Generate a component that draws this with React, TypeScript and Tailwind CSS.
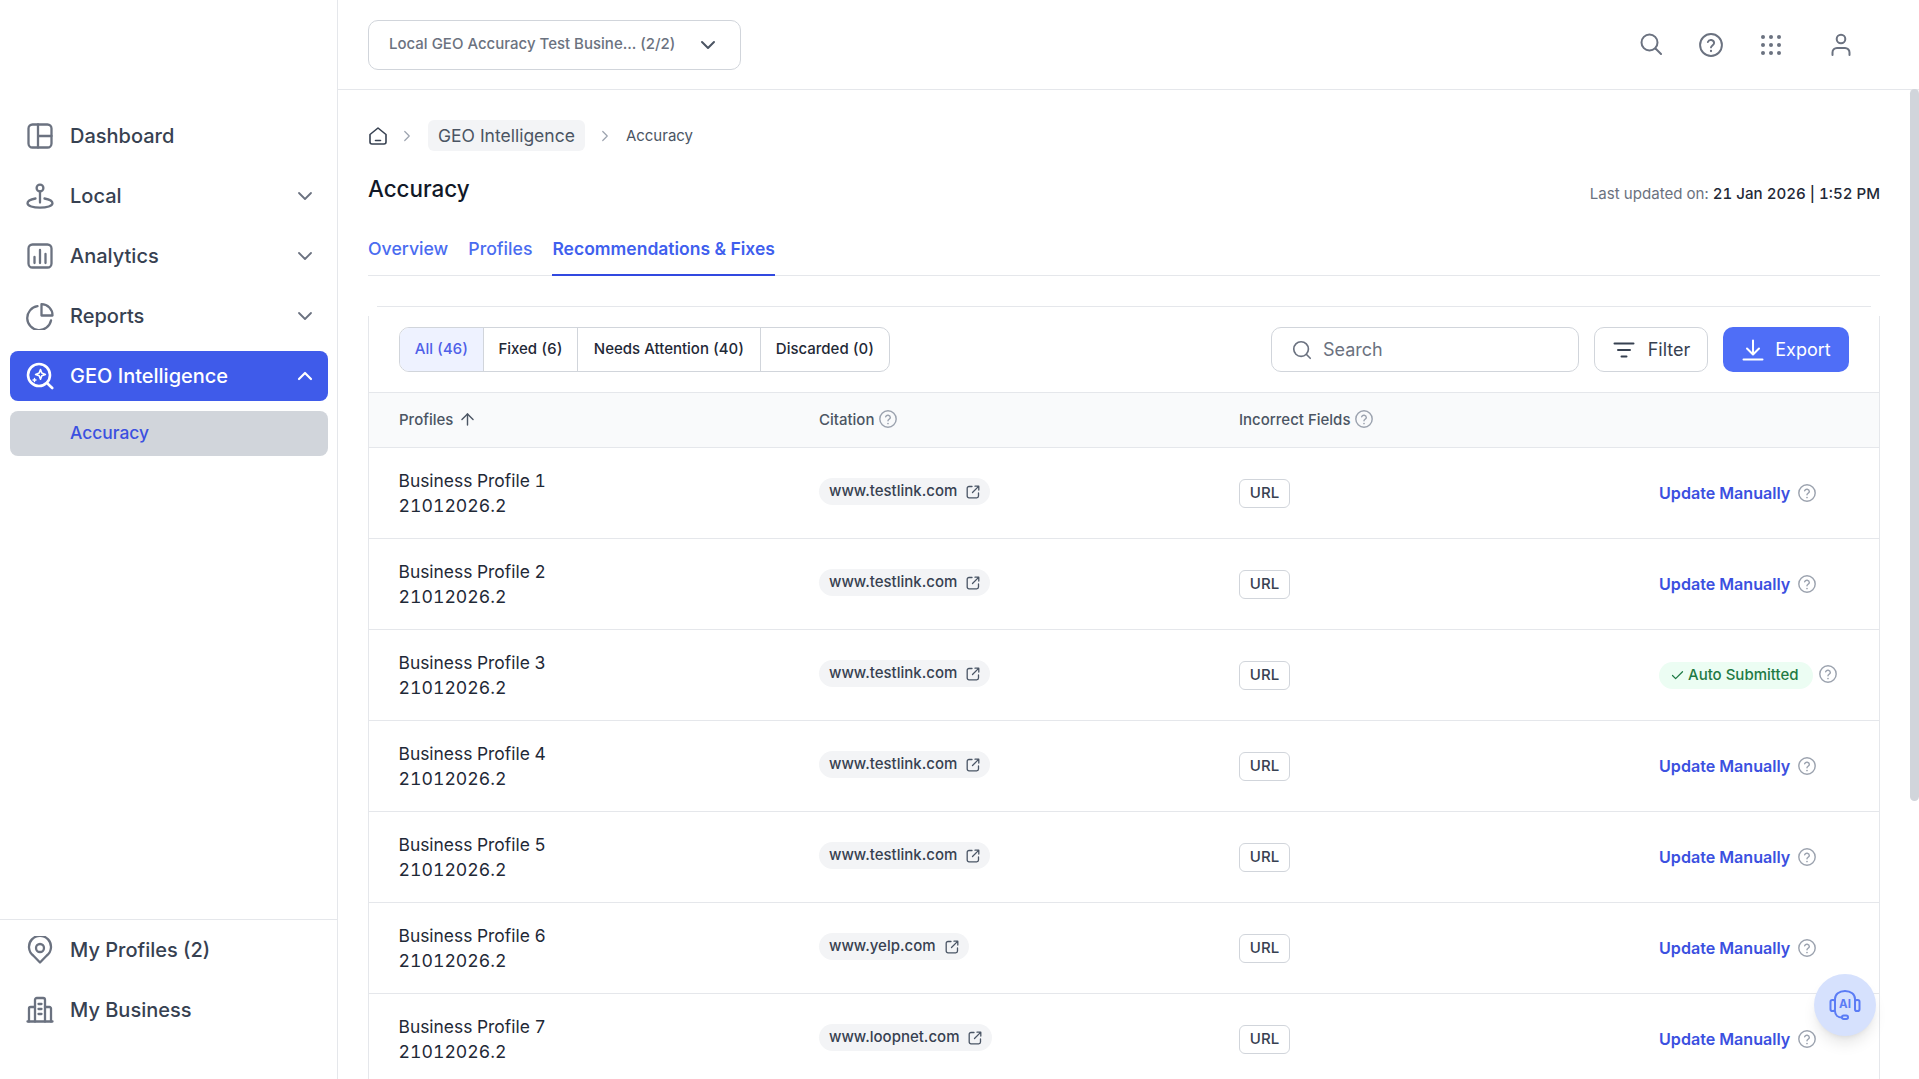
import React from "react";
import { ChevronDown, ChevronUp, ChevronRight, Search, ArrowUp, Check } from "lucide-react";

const Help = ({ className = "" }: { className?: string }) => (
  <svg viewBox="0 0 20 20" fill="none" stroke="currentColor" strokeWidth="1.6" strokeLinecap="round" strokeLinejoin="round" className={className}>
    <circle cx="10" cy="10" r="9.1" />
    <path d="M7.4 7.5a2.7 2.7 0 0 1 5.200.8c0 1.800-2.600 2.200-2.600 3.700" />
    <path d="M10 15h.01" strokeWidth="1.9" />
  </svg>
);
const Ext = () => (
  <svg viewBox="0 0 16 16" fill="none" stroke="currentColor" strokeWidth="1.3" strokeLinecap="round" strokeLinejoin="round" className="w-[16px] h-[16px] text-gray-600 shrink-0">
    <path d="M13.5 9v3a1.8 1.8 0 0 1-1.8 1.8H4A1.8 1.8 0 0 1 2.2 12V4.3A1.8 1.8 0 0 1 4 2.500h3" />
    <path d="M10 2.200h3.800V6M13.600 2.400 7.500 8.500" />
  </svg>
);
const S = ({ children, cls = "w-[28px] h-[28px]" }: { children: React.ReactNode; cls?: string }) => (
  <svg viewBox="0 0 28 28" fill="none" stroke="currentColor" strokeWidth="2.300" strokeLinecap="round" strokeLinejoin="round" className={cls}>{children}</svg>
);
const IDash = () => <S><rect x="2.500" y="2.500" width="23" height="23" rx="4" /><path d="M12 2.500v23M12 14h13.500" /></S>;
const ILocal = () => <S><circle cx="14" cy="6" r="3.400" /><path d="M14 9.500v11" /><path d="M9.500 16.500C5 17.300 1.500 19 1.500 21.300c0 2.600 5.600 4.400 12.500 4.400s12.500-1.800 12.500-4.400c0-2.300-3.500-4-8-4.800" /></S>;
const IChart = () => <S><rect x="2.500" y="2.500" width="23" height="23" rx="4" /><path d="M8.500 21v-6M14 21V8M19.500 21v-9" /></S>;
const IPie = () => <S><path d="M11.500 4.200A12 12 0 1 0 25 18.500" /><path d="M15.500 2.200A11 11 0 0 1 26.500 13.500H15.500z" /></S>;
const IGeo = () => (
  <S>
    <circle cx="13" cy="13" r="11" strokeWidth="2.600" />
    <path d="M22 22l4.200 4" strokeWidth="2.600" />
    <path d="M14.500 7.500l1.300 3.600 3.600 1.300-3.600 1.300-1.300 3.600-1.300-3.600-3.600-1.300 3.600-1.300z" strokeWidth="1.600" />
    <path d="M8.500 16.500v3M7 18h3" strokeWidth="1.400" />
  </S>
);
const IPin = () => <S><path d="M14 26.500 7.200 19.500A11 11 0 1 1 20.800 19.500z" /><circle cx="14" cy="12" r="4" /></S>;
const IBiz = () => <S><path d="M1.500 25.500h25" /><path d="M9 25.500V3.800A1.800 1.800 0 0 1 10.800 2h6.400A1.800 1.800 0 0 1 19 3.800v21.700" /><path d="M9 11H4.500A1.500 1.500 0 0 0 3 12.500v13M19 11h4.500a1.500 1.500 0 0 1 1.500 1.500v13" /><path d="M12.500 8h3M12.500 13h3M12.500 18h3" /></S>;

const NavItem = ({ icon, label, chev }: { icon: React.ReactNode; label: string; chev?: boolean }) => (
  <div className="h-[50px] ml-[10px] mr-[9px] flex items-center pl-[16px] pr-[11px] text-[#374151]">
    <span className="w-[28px] h-[28px] text-[#6b7280] shrink-0">{icon}</span>
    <span className="ml-[16px] text-[20px] font-medium flex-1">{label}</span>
    {chev && <ChevronDown className="w-[24px] h-[24px] text-[#6b7280]" strokeWidth={1.8} />}
  </div>
);

const rows = [
  { n: 1, c: "www.testlink.com" },
  { n: 2, c: "www.testlink.com" },
  { n: 3, c: "www.testlink.com", auto: true },
  { n: 4, c: "www.testlink.com" },
  { n: 5, c: "www.testlink.com" },
  { n: 6, c: "www.yelp.com" },
  { n: 7, c: "www.loopnet.com" },
];

export default function App() {
  return (
    <div className="relative flex h-[1079px] w-full overflow-hidden bg-white" style={{ fontFamily: "Inter, 'Noto Sans', sans-serif" }}>
      <aside className="w-[338px] shrink-0 border-r border-[#e5e7eb] flex flex-col pt-[111px]">
        <nav className="flex flex-col gap-[10px] flex-1">
          <NavItem icon={<IDash />} label="Dashboard" />
          <NavItem icon={<ILocal />} label="Local" chev />
          <NavItem icon={<IChart />} label="Analytics" chev />
          <NavItem icon={<IPie />} label="Reports" chev />
          <div className="h-[50px] ml-[10px] mr-[9px] rounded-[8px] bg-[#3f5bea] text-white flex items-center pl-[16px] pr-[11px]">
            <span className="w-[28px] h-[28px] shrink-0"><IGeo /></span>
            <span className="ml-[16px] text-[20px] font-medium flex-1">GEO Intelligence</span>
            <ChevronUp className="w-[24px] h-[24px]" strokeWidth={2.2} />
          </div>
          <div className="h-[45px] ml-[10px] mr-[9px] rounded-[8px] bg-[#d1d5db] flex items-center pl-[60px] text-[17.400px] font-medium text-[#3b50e0]">Accuracy</div>
        </nav>
        <div className="border-t border-[#e5e7eb] h-[160px] pt-[5px] flex flex-col gap-[10px]">
          <NavItem icon={<IPin />} label="My Profiles (2)" />
          <NavItem icon={<IBiz />} label="My Business" />
        </div>
      </aside>

      <main className="flex-1 min-w-0 flex flex-col">
        <header className="h-[90px] shrink-0 border-b border-[#e5e7eb] flex items-center pl-[30px] pr-[66.500px]">
          <div className="w-[373px] h-[50px] rounded-[10px] border border-[#d1d5db] flex items-center pl-[20px] pr-[20px] justify-between">
            <span className="text-[15px] font-medium text-[#6b7280] whitespace-nowrap -mt-[1px]">Local GEO Accuracy Test Busine... (2/2)</span>
            <ChevronDown className="w-[24px] h-[24px] text-[#4b5563]" strokeWidth={2} />
          </div>
          <div className="ml-auto flex items-center text-[#6b7280]">
            <svg viewBox="0 0 22 22" fill="none" stroke="currentColor" strokeWidth="2" strokeLinecap="round" className="w-[22px] h-[22px] -mt-[1px]">
              <circle cx="9.500" cy="9.500" r="8" />
              <path d="M15.500 15.500 21 21" />
            </svg>
            <Help className="w-[24px] h-[24px] ml-[37px]" />
            <svg viewBox="0 0 20 20" fill="currentColor" className="w-[20px] h-[20px] ml-[38px]">
              {[2, 10, 18].map((y) => [2, 10, 18].map((x) => <circle key={`${x}${y}`} cx={x} cy={y} r="2" />))}
            </svg>
            <svg viewBox="0 0 24 24" fill="none" stroke="currentColor" strokeWidth="2" strokeLinecap="round" className="w-[24px] h-[24px] ml-[48px] -mt-[1px]">
              <circle cx="12" cy="7" r="4.300" />
              <path d="M3.500 23v-2.500A4.500 4.500 0 0 1 8 16h8a4.500 4.500 0 0 1 4.500 4.500V23" />
            </svg>
          </div>
        </header>

        <div className="flex-1 min-h-0 overflow-hidden pl-[30px] pr-[39px] pt-[30px]">
          <div className="flex items-center h-[31px]">
            <svg viewBox="0 0 20 20" fill="none" stroke="#374151" strokeWidth="1.600" strokeLinejoin="round" strokeLinecap="round" className="w-[20px] h-[20px]">
              <path d="M2 8.500 10 2l8 6.500V16a2 2 0 0 1-2 2H4a2 2 0 0 1-2-2z" />
              <path d="M7.500 14.500h5" />
            </svg>
            <ChevronRight className="w-[18px] h-[18px] text-[#9ca3af] ml-[10px]" strokeWidth={1.6} />
            <span className="ml-[12px] h-[31px] pt-[1px] px-[10px] rounded-[6px] bg-[#f3f4f6] flex items-center text-[17.500px] text-[#4b5563]">GEO Intelligence</span>
            <ChevronRight className="w-[18px] h-[18px] text-[#9ca3af] ml-[11px]" strokeWidth={1.6} />
            <span className="ml-[12px] text-[15px] text-[#4b5563] mt-[2px]">Accuracy</span>
          </div>

          <div className="flex justify-between items-start mt-[22px] h-[32px]">
            <h1 className="text-[22.400px] leading-[32px] font-medium text-[#111827]">Accuracy</h1>
            <div className="text-[15.100px] leading-[32px] mt-[5px] text-[#6b7280] tabular-nums">Last updated on: <span className="text-[#1f2937] font-medium">21 Jan 2026 | 1:52 PM</span></div>
          </div>

          <div className="flex gap-[20px] mt-[31px] h-[40px] border-b border-[#e5e7eb] text-[17.700px] font-medium text-[#4a6cf0]">
            <span className="h-[40px] flex items-center pb-[14px]">Overview</span>
            <span className="h-[40px] flex items-center pb-[14px]">Profiles</span>
            <span className="h-[40px] flex items-center pb-[12px] border-b-[2px] border-[#3149e0] font-semibold box-border text-[17.500px] text-[#3f5fee]">Recommendations &amp; Fixes</span>
          </div>

          <section className="mt-[30px]">
            <div className="h-px mx-[9px] bg-[#e5e7eb]" />
            <div className="mt-[9px] border-x border-[#e5e7eb] pb-[400px]">
              <div className="h-[77px] flex items-start pt-[11px] pl-[30px] pr-[30px] border-b border-[#e5e7eb]">
                <div className="flex h-[45px] rounded-[10px] border border-[#d1d5db] overflow-hidden text-[15px] font-medium text-[#1f2937] tabular-nums">
                  <div className="w-[84px] flex items-center justify-center bg-[#eef2ff] text-[#4f5fe8] border-r border-[#d1d5db]">All (46)</div>
                  <div className="w-[94px] flex items-center justify-center border-r border-[#d1d5db]">Fixed (6)</div>
                  <div className="w-[183px] flex items-center justify-center border-r border-[#d1d5db]">Needs Attention (40)</div>
                  <div className="w-[128px] flex items-center justify-center">Discarded (0)</div>
                </div>
                <div className="ml-auto w-[308px] h-[45px] rounded-[10px] border border-[#d1d5db] flex items-center pl-[19px] text-[18px] text-[#6b7280]">
                  <Search className="w-[22px] h-[22px] mr-[10px]" strokeWidth={1.8} />
                  Search
                </div>
                <div className="ml-[15px] w-[114px] h-[45px] rounded-[10px] border border-[#d1d5db] flex items-center justify-center text-[18px] text-[#374151] gap-[13px]">
                  <svg viewBox="0 0 22 22" fill="none" stroke="#374151" strokeWidth="2" strokeLinecap="round" className="w-[22px] h-[22px] ml-[1px]"><path d="M1.500 4.500h19M5 11h12M8.500 17.500h5" /></svg>
                  Filter
                </div>
                <div className="ml-[15px] w-[126px] h-[45px] rounded-[10px] bg-[#4f6ef7] flex items-center justify-center text-[18px] text-white gap-[11px]">
                  <svg viewBox="0 0 22 22" fill="none" stroke="#fff" strokeWidth="2" strokeLinecap="round" strokeLinejoin="round" className="w-[22px] h-[22px] ml-[1px]"><path d="M11 1.500V15M5 9.500l6 6 6-6M1.500 20.500h19" /></svg>
                  Export
                </div>
              </div>

              <div className="h-[55px] bg-[#f9fafb] border-b border-[#e5e7eb] grid grid-cols-[420px_420px_420px_1fr] pl-[30px] items-center text-[15px] font-medium text-[#4b5563]">
                <div className="flex items-center gap-[5px]">Profiles <ArrowUp className="w-[19px] h-[19px] -mt-[2px]" strokeWidth={1.8} /></div>
                <div className="flex items-center gap-[5px]">Citation <Help className="w-[18px] h-[18px] text-[#9ca3af] -mt-[3px]" /></div>
                <div className="flex items-center gap-[5px]">Incorrect Fields <Help className="w-[18px] h-[18px] text-[#9ca3af] -mt-[3px]" /></div>
                <div />
              </div>

              {rows.map((r) => (
                <div key={r.n} className="h-[91px] border-b border-[#e5e7eb] grid grid-cols-[420px_420px_420px_1fr] pl-[30px] items-center">
                  <div className="leading-[25px] text-[#1f2937] tabular-nums -ml-[0.500px]">
                    <div className="text-[17.400px]">Business Profile {r.n}</div>
                    <div className="text-[17.700px]">21012026.2</div>
                  </div>
                  <div className="flex">
                    <div className="h-[27px] -mt-[3px] rounded-full bg-[#f3f4f6] pl-[10px] pr-[9px] flex items-center gap-[8px] text-[15px] font-medium text-[#374151]">
                      {r.c}
                      <Ext />
                    </div>
                  </div>
                  <div className="flex">
                    <div className="h-[29px] w-[51px] rounded-[6px] border border-[#d1d5db] flex items-center justify-center text-[15px] font-medium text-[#374151]">URL</div>
                  </div>
                  <div className="flex items-center">
                    {r.auto ? (
                      <>
                        <div className="h-[27px] w-[154px] rounded-full bg-[#ecfdf3] flex items-center pl-[11px] gap-[3px] text-[15px] font-medium text-[#1f7a45]">
                          <Check className="w-[15px] h-[15px]" strokeWidth={2} />
                          Auto Submitted
                        </div>
                        <Help className="w-[18px] h-[18px] text-[#9ca3af] ml-[6px] -mt-[3px]" />
                      </>
                    ) : (
                      <>
                        <span className="text-[16.100px] font-semibold text-[#3b50e0]">Update Manually</span>
                        <Help className="w-[18px] h-[18px] text-[#9ca3af] ml-[8px]" />
                      </>
                    )}
                  </div>
                </div>
              ))}
            </div>
          </section>
        </div>
      </main>

      <div className="absolute right-0 top-[89px] w-[9px] h-[712px] rounded-full bg-[#d1d5db]" />
      <div className="absolute left-[1814px] top-[974px] w-[62px] h-[62px] rounded-full bg-[#d6e1fd] shadow-lg flex items-center justify-center text-[#5b7cf5]">
        <svg viewBox="0 0 32 32" fill="none" stroke="currentColor" strokeWidth="2" strokeLinecap="round" strokeLinejoin="round" className="w-[32px] h-[32px]">
          <path d="M6 12V10C6 5.500 10 2 16 2s10 3.500 10 8v2" />
          <rect x="1.500" y="11" width="4.500" height="11" rx="1.800" />
          <rect x="26" y="11" width="4.500" height="11" rx="1.800" />
          <path d="M6 22c0 4 3 6.500 7 6.500" />
          <rect x="13" y="26.500" width="6" height="3.500" rx="1.700" />
          <text x="16" y="19" textAnchor="middle" fontSize="11.500" fontWeight="700" fill="currentColor" stroke="none" fontFamily="Inter">AI</text>
        </svg>
      </div>
    </div>
  );
}
